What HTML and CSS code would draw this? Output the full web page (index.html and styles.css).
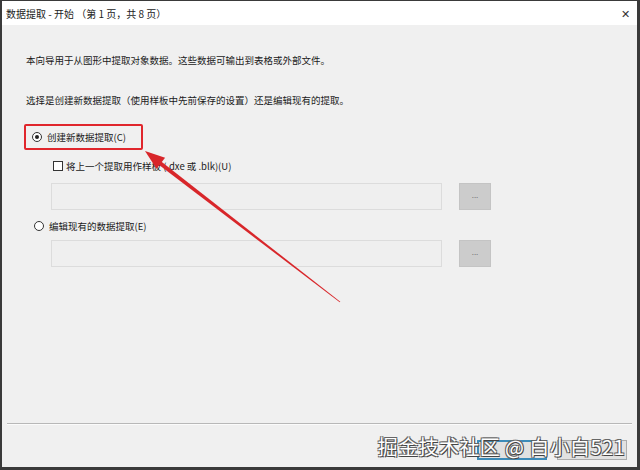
FILE: index.html
```html
<!DOCTYPE html>
<html lang="zh-CN">
<head>
    <meta charset="UTF-8">
    <title>数据提取 - 开始</title>
    <link rel="stylesheet" href="styles.css">
</head>
<body>
    <div class="window">
        <div class="titlebar">
            <span class="title">数据提取 - 开始 （第 1 页，共 8 页）</span>
            <span class="close">✕</span>
        </div>
        <div class="content">
            <p class="intro">本向导用于从图形中提取对象数据。这些数据可输出到表格或外部文件。</p>
            <p class="question">选择是创建新数据提取（使用样板中先前保存的设置）还是编辑现有的提取。</p>

            <div class="option highlight">
                <span class="radio checked"></span>
                <span>创建新数据提取(C)</span>
            </div>
            <div class="check-row">
                <span class="checkbox"></span>
                <span>将上一个提取用作样板 (.dxe 或 .blk)(U)</span>
            </div>
            <div class="path-row">
                <div class="path-input"></div>
                <div class="browse">...</div>
            </div>

            <div class="option">
                <span class="radio"></span>
                <span>编辑现有的数据提取(E)</span>
            </div>
            <div class="path-row">
                <div class="path-input"></div>
                <div class="browse">...</div>
            </div>
        </div>
        <div class="footer">
            <div class="separator"></div>
            <div class="buttons">
                <div class="btn default"></div>
                <div class="btn"></div>
            </div>
        </div>

        <!-- red annotation arrow pointing at the first option -->
        <svg class="arrow" width="640" height="470" viewBox="0 0 640 470">
            <polygon points="158.8,164.8 161.2,161.6 340.3,301.7 339.7,302.3" fill="#d8262a"/>
            <polygon points="145,151 165.1,157.7 156.5,168.7" fill="#d8262a"/>
        </svg>

        <div class="watermark">掘金技术社区 @ 白小白521</div>
    </div>
</body>
</html>
```

FILE: styles.css
```css
* {
    box-sizing: border-box;
    margin: 0;
    padding: 0;
}

body {
    width: 640px;
    height: 470px;
    overflow: hidden;
    font-family: "Noto Sans CJK SC", "Noto Sans", sans-serif;
    font-size: 9.5px;
    color: #1a1a1a;
    background-color: #f0f0f0;
}

.window {
    position: relative;
    width: 640px;
    height: 470px;
    display: flex;
    flex-direction: column;
    border-top: 1px solid #3a3a3a;
    border-left: 2px solid #3a3a3a;
    border-right: 3px solid #3a3a3a;
    border-bottom: 3px solid #3a3a3a;
    background-color: #f0f0f0;
}

.titlebar {
    height: 24px;
    flex: none;
    display: flex;
    align-items: center;
    justify-content: space-between;
    padding: 0 7px 0 4px;
    background-color: #fff;
    font-size: 10px;
    color: #222;
}

.close {
    font-size: 11px;
    color: #333;
}

.content {
    flex: 1;
    padding: 28px 0 0 24px;
}

.intro,
.question {
    line-height: 14px;
}

.question {
    margin-top: 26px;
}

.option {
    display: flex;
    align-items: center;
    gap: 5px;
    height: 26px;
    padding-left: 8px;
}

.highlight {
    display: inline-flex;
    margin: 17px 0 0 -2px;
    width: 119px;
    border: 2px solid #e0262c;
    border-radius: 2px;
    padding-left: 6px;
}

.radio {
    width: 10px;
    height: 10px;
    border: 1px solid #333;
    border-radius: 50%;
    background-color: #fff;
    position: relative;
}

.radio.checked::after {
    content: "";
    position: absolute;
    left: 2px;
    top: 2px;
    width: 4px;
    height: 4px;
    border-radius: 50%;
    background-color: #222;
}

.check-row {
    display: flex;
    align-items: center;
    gap: 3px;
    margin: 8px 0 0 27px;
    height: 16px;
}

.checkbox {
    width: 10px;
    height: 10px;
    border: 1px solid #333;
    background-color: #fff;
}

.path-row {
    display: flex;
    gap: 17px;
    margin: 9px 0 0 25px;
}

.path-input {
    width: 391px;
    height: 27px;
    border: 1px solid #dcdcdc;
    background-color: #efefef;
}

.browse {
    width: 32px;
    height: 27px;
    background-color: #cccccc;
    border: 1px solid #c4c4c4;
    color: #777;
    font-size: 8px;
    text-align: center;
    line-height: 22px;
}

.option + .path-row {
    margin-top: 1px;
}

.path-row + .option {
    margin-top: 3px;
}

.footer {
    flex: none;
    height: 44px;
    padding: 0 5px;
}

.separator {
    border-top: 1px solid #b8b8b8;
    border-bottom: 1px solid #fbfbfb;
}

.buttons {
    display: flex;
    justify-content: flex-end;
    gap: 10px;
    padding: 15px 5px 0 0;
}

.btn {
    width: 70px;
    height: 20px;
    border: 1px solid #adadad;
    background-color: #e1e1e1;
}

.btn.default {
    border: 2px solid #3c8bb8;
}

.arrow {
    position: absolute;
    left: -2px;
    top: -1px;
    pointer-events: none;
}

.watermark {
    position: absolute;
    right: 12px;
    bottom: 6px;
    font-size: 20px;
    letter-spacing: 0.4px;
    color: #fff;
    text-shadow: 1px 1px 0 #444, -1px -1px 0 #666, 1px -1px 0 #666, -1px 1px 0 #666;
}
```
